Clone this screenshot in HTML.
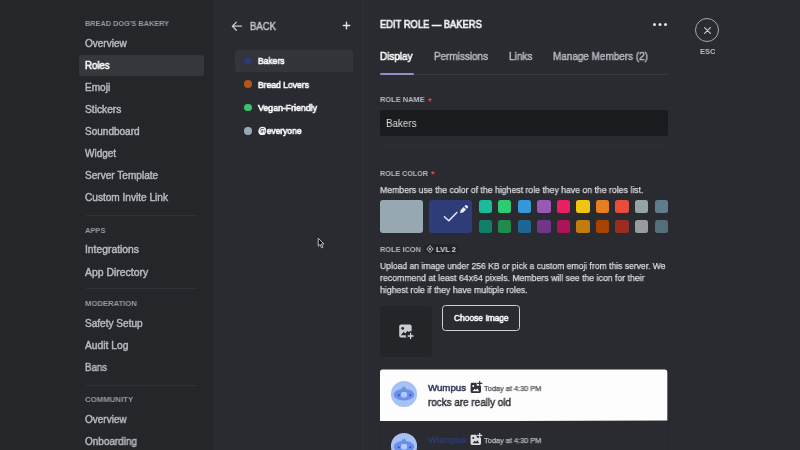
<!DOCTYPE html>
<html>
<head>
<meta charset="utf-8">
<title>Edit Role</title>
<style>
*{box-sizing:border-box;margin:0;padding:0}
html,body{width:800px;height:450px;overflow:hidden;background:#2a2b30}
body{font-family:"Liberation Sans",sans-serif;position:relative;color:#dbdee1}
.abs{position:absolute;white-space:nowrap}
.t{position:absolute;white-space:nowrap;transform-origin:0 50%;will-change:transform}
#side{position:absolute;left:0;top:0;width:212.5px;height:450px;background:#25262a}
#mid{position:absolute;left:212.5px;top:0;width:151px;height:450px;background:#2a2b30}
#main{position:absolute;left:363px;top:0;width:437px;height:450px;background:#2a2b30;border-left:1.5px solid #303237}
.sep{position:absolute;left:85.5px;width:111px;height:1px;background:#303136}
.dot{position:absolute;left:244.400px;width:7.500px;height:7.500px;border-radius:50%}
.sw{position:absolute;width:13.200px;height:13.200px;border-radius:2.500px}
</style>
</head>
<body>
<div id="side"></div>
<div id="mid"></div>
<div id="main"></div>

<div class="abs" style="left:78.800px;top:54.5px;width:125px;height:21px;border-radius:3px;background:#36373d"></div>
<div class="sep" style="top:215.300px"></div>
<div class="sep" style="top:288.300px"></div>
<div class="sep" style="top:384.800px"></div>

<svg class="abs" style="left:230px;top:19px" width="14" height="14" viewBox="0 0 14 14"><path d="M11.500 7.200H2.800M6.400 3.100L2.400 7.200l4 4.100" fill="none" stroke="#c4c9ce" stroke-width="1.300" stroke-linecap="round" stroke-linejoin="round"/></svg>
<svg class="abs" style="left:342px;top:21px" width="9" height="9" viewBox="0 0 9 9"><path d="M4.500 1.300v6.400M1.300 4.500h6.400" stroke="#e3e5e8" stroke-width="1.400" stroke-linecap="round"/></svg>

<div class="abs" style="left:235px;top:49.500px;width:118px;height:22px;border-radius:3px;background:#34353b"></div>
<div class="dot" style="top:56.600px;background:#2b3a72"></div>
<div class="dot" style="top:80.300px;background:#b4531b"></div>
<div class="dot" style="top:103.700px;background:#3fc06d"></div>
<div class="dot" style="top:127.200px;background:#9aa7b3"></div>

<svg class="abs" style="left:317px;top:237px" width="10" height="14" viewBox="0 0 10 14"><path d="M1.200 1.200v8l1.900-1.700 1.500 3.300 1.300-.6-1.500-3.200h2.600z" fill="#0c0c0e" stroke="#c9c9cb" stroke-width=".9" stroke-linejoin="round"/></svg>

<div class="abs" style="left:653px;top:23.200px;width:3px;height:3px;border-radius:50%;background:#e3e5e8;box-shadow:5.500px 0 0 #e3e5e8,11px 0 0 #e3e5e8"></div>
<div class="abs" style="left:695px;top:18.300px;width:24px;height:24px;border-radius:50%;border:1.800px solid #a6a9af"></div>
<svg class="abs" style="left:702.500px;top:25.500px" width="9" height="9" viewBox="0 0 9 9"><path d="M1.600 1.600l5.800 5.800M7.400 1.600L1.600 7.400" stroke="#c4c9ce" stroke-width="1.200" stroke-linecap="round"/></svg>

<div class="abs" style="left:380px;top:73.500px;width:288px;height:1px;background:#393a40"></div>
<div class="abs" style="left:380px;top:73px;width:33.500px;height:2px;border-radius:1px;background:#8c91c9"></div>

<div class="abs" style="left:380px;top:110px;width:287.500px;height:26px;border-radius:2px;background:#1a1b1e"></div>
<div class="abs" style="left:380px;top:144.500px;width:287.500px;height:1px;background:#2e2f34"></div>

<div class="abs" style="left:380px;top:200px;width:43px;height:33px;border-radius:3px;background:#98a8b3"></div>
<div class="abs" style="left:429px;top:200px;width:43.300px;height:33px;border-radius:3px;background:#2e3c79"></div>
<svg class="abs" style="left:429px;top:200px" width="44" height="33" viewBox="0 0 44 33"><path d="M15.400 16.800l4.400 4 8-8.200" fill="none" stroke="#e9ecfa" stroke-width="1.500" stroke-linecap="round" stroke-linejoin="round"/><path d="M36.300 5.300a1.100 1.100 0 0 1 1.600 0l.9.900a1.100 1.100 0 0 1 0 1.600l-.9.900-2.500-2.500zM34.600 7l2.500 2.500-3 3-3 .6.600-3z" fill="#e9ebf2"/></svg>

<div class="sw" style="left:478.8px;top:200px;background:#1abc9c"></div>
<div class="sw" style="left:478.8px;top:219.6px;background:#11806a"></div>
<div class="sw" style="left:498.3px;top:200px;background:#2ecc71"></div>
<div class="sw" style="left:498.3px;top:219.6px;background:#1f8b4c"></div>
<div class="sw" style="left:517.8px;top:200px;background:#3498db"></div>
<div class="sw" style="left:517.8px;top:219.6px;background:#206694"></div>
<div class="sw" style="left:537.4px;top:200px;background:#9b59b6"></div>
<div class="sw" style="left:537.4px;top:219.6px;background:#71368a"></div>
<div class="sw" style="left:556.9px;top:200px;background:#e91e63"></div>
<div class="sw" style="left:556.9px;top:219.6px;background:#ad1457"></div>
<div class="sw" style="left:576.4px;top:200px;background:#f1c40f"></div>
<div class="sw" style="left:576.4px;top:219.6px;background:#c27c0e"></div>
<div class="sw" style="left:595.9px;top:200px;background:#e67e22"></div>
<div class="sw" style="left:595.9px;top:219.6px;background:#a84300"></div>
<div class="sw" style="left:615.4px;top:200px;background:#e74c3c"></div>
<div class="sw" style="left:615.4px;top:219.6px;background:#992d22"></div>
<div class="sw" style="left:635.0px;top:200px;background:#95a5a6"></div>
<div class="sw" style="left:635.0px;top:219.6px;background:#979c9f"></div>
<div class="sw" style="left:654.5px;top:200px;background:#607d8b"></div>
<div class="sw" style="left:654.5px;top:219.6px;background:#546e7a"></div>
<div class="abs" style="left:424.300px;top:243.500px;width:35px;height:10.500px;border-radius:5.250px;background:#222327"></div>
<svg class="abs" style="left:426px;top:245px" width="8" height="8" viewBox="0 0 8 8"><path d="M4 .5L7.200 4 4 7.500.8 4z" fill="none" stroke="#c4c9ce" stroke-width=".9" stroke-linejoin="round"/><path d="M4 2.600L5.300 4 4 5.400 2.700 4z" fill="#c4c9ce"/></svg>

<div class="abs" style="left:380px;top:305.500px;width:52px;height:51px;border-radius:4px;background:#232529"></div>
<svg class="abs" style="left:398px;top:323px" width="18" height="18" viewBox="0 0 18 18"><rect x="1.200" y="1.600" width="12.400" height="13" rx="1.800" fill="#c9cdd3"/><circle cx="4.700" cy="5.400" r="1.400" fill="#232529"/><path d="M2.800 12.200l2.900-3.400 1.700 1.800 2.200-2.800 2.600 2.800v1.600z" fill="#232529"/><path d="M12.600 9.800v6.400M9.400 13h6.400" stroke="#232529" stroke-width="3.400" stroke-linecap="round"/><path d="M12.600 10.500v5M10.100 13h5" stroke="#d5d8dd" stroke-width="1.300" stroke-linecap="round"/></svg>

<div class="abs" style="left:442px;top:304.500px;width:77.500px;height:26px;border-radius:3.500px;border:1.300px solid #cfd1d5"></div>

<svg class="abs" style="left:379px;top:367px" width="290" height="55" viewBox="0 0 290 55"><path d="M1 54.500V5a2.500 2.500 0 0 1 2.500-2.500h282.300a2.500 2.500 0 0 1 2.500 2.500v48.500z" fill="#fdfdfd"/></svg>
<div class="abs" style="left:380px;top:420.500px;width:287.500px;height:30px;background:#2a2b30;border:1px solid #242529;border-top:none"></div>
<svg class="abs" style="left:390px;top:380.1px" width="28" height="28" viewBox="-14 -14 28 28"><circle r="13.100" fill="#a7c0f6"/><path d="M-2.400 -4.500l.5-3 1.300 1.600L.8-7.900l1.400 3.600z" fill="#5d93d6"/><ellipse cx="0" cy=".7" rx="10.300" ry="5.900" fill="#6a90ea"/><rect x="-2.900" y="-1.900" width="6" height="5.400" rx="1.800" fill="#b4c9f8"/><circle cx="-5.200" cy="1.200" r=".95" fill="#2f4fb8"/><circle cx="6.300" cy="1.200" r=".95" fill="#2f4fb8"/></svg>
<svg class="abs" style="left:390px;top:432px" width="28" height="28" viewBox="-14 -14 28 28"><circle r="13.100" fill="#a7c0f6"/><path d="M-2.400 -4.500l.5-3 1.300 1.600L.8-7.900l1.400 3.600z" fill="#5d93d6"/><ellipse cx="0" cy=".7" rx="10.300" ry="5.900" fill="#6a90ea"/><rect x="-2.900" y="-1.900" width="6" height="5.400" rx="1.800" fill="#b4c9f8"/><circle cx="-5.200" cy="1.200" r=".95" fill="#2f4fb8"/><circle cx="6.300" cy="1.200" r=".95" fill="#2f4fb8"/></svg>
<svg class="abs" style="left:469.5px;top:380.5px" width="13" height="13" viewBox="0 0 13 13"><path d="M2 1.700h4.600v2a1.100 1.100 0 0 0 1.100 1.100H11v5.800A1.400 1.400 0 0 1 9.600 12H2A1.400 1.400 0 0 1 .6 10.600V3.100A1.400 1.400 0 0 1 2 1.700z" fill="#313338"/><circle cx="3.300" cy="5" r="1.050" fill="#fdfdfd"/><path d="M2.600 10.200l2-2.400 1.300 1.300 1.500-1.800 1.700 2.900z" fill="#fdfdfd"/><path d="M9.700 0.200v4.200M7.600 2.300h4.200" stroke="#313338" stroke-width="1.200" stroke-linecap="round"/></svg>
<svg class="abs" style="left:469.5px;top:432.5px" width="13" height="13" viewBox="0 0 13 13"><path d="M2 1.700h4.600v2a1.100 1.100 0 0 0 1.100 1.100H11v5.800A1.400 1.400 0 0 1 9.600 12H2A1.400 1.400 0 0 1 .6 10.600V3.100A1.400 1.400 0 0 1 2 1.700z" fill="#dbdee1"/><circle cx="3.300" cy="5" r="1.050" fill="#2a2b30"/><path d="M2.600 10.200l2-2.400 1.300 1.300 1.500-1.800 1.700 2.900z" fill="#2a2b30"/><path d="M9.700 0.200v4.200M7.600 2.300h4.200" stroke="#dbdee1" stroke-width="1.200" stroke-linecap="round"/></svg>

<div class="t" style="left:85.3px;top:18px;font-size:8px;line-height:11px;font-weight:700;color:#949ba4;transform:scaleX(0.9146);">BREAD DOG'S BAKERY</div>
<div class="t" style="left:85.3px;top:37px;font-size:10px;line-height:14px;font-weight:400;color:#b5bac1;transform:scaleX(1.0003);-webkit-text-stroke:.45px currentColor;">Overview</div>
<div class="t" style="left:85.3px;top:59px;font-size:10px;line-height:14px;font-weight:400;color:#ffffff;transform:scaleX(0.9657);-webkit-text-stroke:.55px currentColor;">Roles</div>
<div class="t" style="left:85.3px;top:81px;font-size:10px;line-height:14px;font-weight:400;color:#b5bac1;transform:scaleX(1.0074);-webkit-text-stroke:.45px currentColor;">Emoji</div>
<div class="t" style="left:85.3px;top:103px;font-size:10px;line-height:14px;font-weight:400;color:#b5bac1;transform:scaleX(1.0236);-webkit-text-stroke:.45px currentColor;">Stickers</div>
<div class="t" style="left:85.3px;top:125px;font-size:10px;line-height:14px;font-weight:400;color:#b5bac1;transform:scaleX(1.0018);-webkit-text-stroke:.45px currentColor;">Soundboard</div>
<div class="t" style="left:85.3px;top:147px;font-size:10px;line-height:14px;font-weight:400;color:#b5bac1;transform:scaleX(0.9992);-webkit-text-stroke:.45px currentColor;">Widget</div>
<div class="t" style="left:85.3px;top:169px;font-size:10px;line-height:14px;font-weight:400;color:#b5bac1;transform:scaleX(1.0077);-webkit-text-stroke:.45px currentColor;">Server Template</div>
<div class="t" style="left:85.3px;top:191px;font-size:10px;line-height:14px;font-weight:400;color:#b5bac1;transform:scaleX(1.0089);-webkit-text-stroke:.45px currentColor;">Custom Invite Link</div>
<div class="t" style="left:85.3px;top:225px;font-size:8px;line-height:11px;font-weight:700;color:#949ba4;transform:scaleX(0.9359);">APPS</div>
<div class="t" style="left:85.3px;top:243px;font-size:10px;line-height:14px;font-weight:400;color:#b5bac1;transform:scaleX(1.0332);-webkit-text-stroke:.45px currentColor;">Integrations</div>
<div class="t" style="left:85.3px;top:266px;font-size:10px;line-height:14px;font-weight:400;color:#b5bac1;transform:scaleX(1.0416);-webkit-text-stroke:.45px currentColor;">App Directory</div>
<div class="t" style="left:85.3px;top:298px;font-size:8px;line-height:11px;font-weight:700;color:#949ba4;transform:scaleX(0.9597);">MODERATION</div>
<div class="t" style="left:85.3px;top:317px;font-size:10px;line-height:14px;font-weight:400;color:#b5bac1;transform:scaleX(1.0076);-webkit-text-stroke:.45px currentColor;">Safety Setup</div>
<div class="t" style="left:85.3px;top:339px;font-size:10px;line-height:14px;font-weight:400;color:#b5bac1;transform:scaleX(1.0268);-webkit-text-stroke:.45px currentColor;">Audit Log</div>
<div class="t" style="left:85.3px;top:361px;font-size:10px;line-height:14px;font-weight:400;color:#b5bac1;transform:scaleX(0.9650);-webkit-text-stroke:.45px currentColor;">Bans</div>
<div class="t" style="left:85.3px;top:394px;font-size:8px;line-height:11px;font-weight:700;color:#949ba4;transform:scaleX(0.9771);">COMMUNITY</div>
<div class="t" style="left:85.3px;top:413px;font-size:10px;line-height:14px;font-weight:400;color:#b5bac1;transform:scaleX(0.9955);-webkit-text-stroke:.45px currentColor;">Overview</div>
<div class="t" style="left:85.3px;top:435px;font-size:10px;line-height:14px;font-weight:400;color:#b5bac1;transform:scaleX(0.9930);-webkit-text-stroke:.45px currentColor;">Onboarding</div>
<div class="t" style="left:249.5px;top:19px;font-size:10.5px;line-height:15px;font-weight:400;color:#c0c4ca;transform:scaleX(0.9093);-webkit-text-stroke:.45px currentColor;">BACK</div>
<div class="t" style="left:257.5px;top:54px;font-size:9.5px;line-height:13px;font-weight:400;color:#fafafb;transform:scaleX(0.8959);-webkit-text-stroke:.65px currentColor;">Bakers</div>
<div class="t" style="left:257.5px;top:78px;font-size:9.5px;line-height:13px;font-weight:400;color:#fafafb;transform:scaleX(0.9024);-webkit-text-stroke:.65px currentColor;">Bread Lovers</div>
<div class="t" style="left:257.5px;top:101px;font-size:9.5px;line-height:13px;font-weight:400;color:#fafafb;transform:scaleX(0.9232);-webkit-text-stroke:.65px currentColor;">Vegan-Friendly</div>
<div class="t" style="left:257.5px;top:124px;font-size:9.5px;line-height:13px;font-weight:400;color:#fafafb;transform:scaleX(0.8926);-webkit-text-stroke:.65px currentColor;">@everyone</div>
<div class="t" style="left:380px;top:17px;font-size:10.5px;line-height:15px;font-weight:400;color:#f2f3f5;transform:scaleX(0.8915);-webkit-text-stroke:.7px currentColor;">EDIT ROLE — BAKERS</div>
<div class="t" style="left:699.5px;top:47px;font-size:7.5px;line-height:10px;font-weight:700;color:#b5bac1;transform:scaleX(0.9726);">ESC</div>
<div class="t" style="left:380px;top:49px;font-size:10.5px;line-height:15px;font-weight:400;color:#ffffff;transform:scaleX(0.9437);-webkit-text-stroke:.55px currentColor;">Display</div>
<div class="t" style="left:433.5px;top:49px;font-size:10.5px;line-height:15px;font-weight:400;color:#b5bac1;transform:scaleX(0.9443);-webkit-text-stroke:.45px currentColor;">Permissions</div>
<div class="t" style="left:508.5px;top:49px;font-size:10.5px;line-height:15px;font-weight:400;color:#b5bac1;transform:scaleX(0.9586);-webkit-text-stroke:.45px currentColor;">Links</div>
<div class="t" style="left:552.5px;top:49px;font-size:10.5px;line-height:15px;font-weight:400;color:#b5bac1;transform:scaleX(0.9465);-webkit-text-stroke:.45px currentColor;">Manage Members (2)</div>
<div class="t" style="left:380px;top:94px;font-size:8px;line-height:11px;font-weight:700;color:#b5bac1;transform:scaleX(0.9271);">ROLE NAME</div>
<div class="t" style="left:427.8px;top:94px;font-size:9.5px;line-height:13px;font-weight:700;color:#e0484d;">*</div>
<div class="t" style="left:386px;top:116px;font-size:10.5px;line-height:15px;font-weight:400;color:#dbdee1;transform:scaleX(0.9331);">Bakers</div>
<div class="t" style="left:380px;top:168px;font-size:8px;line-height:11px;font-weight:700;color:#b5bac1;transform:scaleX(0.8998);">ROLE COLOR</div>
<div class="t" style="left:431.3px;top:167px;font-size:9.5px;line-height:13px;font-weight:700;color:#e0484d;">*</div>
<div class="t" style="left:380px;top:183px;font-size:9.5px;line-height:13px;font-weight:400;color:#dbdee1;transform:scaleX(0.9149);-webkit-text-stroke:.25px currentColor;">Members use the color of the highest role they have on the roles list.</div>
<div class="t" style="left:380px;top:244px;font-size:8px;line-height:11px;font-weight:700;color:#b5bac1;transform:scaleX(0.9178);">ROLE ICON</div>
<div class="t" style="left:436px;top:244px;font-size:8px;line-height:11px;font-weight:700;color:#dbdee1;transform:scaleX(0.9503);">LVL 2</div>
<div class="t" style="left:380px;top:259px;font-size:9.5px;line-height:13px;font-weight:400;color:#dbdee1;transform:scaleX(0.9017);-webkit-text-stroke:.25px currentColor;">Upload an image under 256 KB or pick a custom emoji from this server. We</div>
<div class="t" style="left:380px;top:271px;font-size:9.5px;line-height:13px;font-weight:400;color:#dbdee1;transform:scaleX(0.9175);-webkit-text-stroke:.25px currentColor;">recommend at least 64x64 pixels. Members will see the icon for their</div>
<div class="t" style="left:380px;top:283px;font-size:9.5px;line-height:13px;font-weight:400;color:#dbdee1;transform:scaleX(0.9128);-webkit-text-stroke:.25px currentColor;">highest role if they have multiple roles.</div>
<div class="t" style="left:453.5px;top:311px;font-size:9.5px;line-height:13px;font-weight:400;color:#ffffff;transform:scaleX(0.8819);-webkit-text-stroke:.55px currentColor;">Choose Image</div>
<div class="t" style="left:427.5px;top:381px;font-size:9.5px;line-height:13px;font-weight:400;color:#363f5e;transform:scaleX(1.0184);-webkit-text-stroke:.55px currentColor;">Wumpus</div>
<div class="t" style="left:484px;top:384px;font-size:7.5px;line-height:10px;font-weight:400;color:#4e5058;transform:scaleX(0.9850);-webkit-text-stroke:.25px currentColor;">Today at 4:30 PM</div>
<div class="t" style="left:427.5px;top:395px;font-size:10.5px;line-height:15px;font-weight:400;color:#2e3036;transform:scaleX(0.9418);-webkit-text-stroke:.45px currentColor;">rocks are really old</div>
<div class="t" style="left:427.5px;top:433px;font-size:9.5px;line-height:13px;font-weight:400;color:#2c3a70;transform:scaleX(1.0184);-webkit-text-stroke:.55px currentColor;">Wumpus</div>
<div class="t" style="left:484px;top:436px;font-size:7.5px;line-height:10px;font-weight:400;color:#b5bac1;transform:scaleX(0.9850);-webkit-text-stroke:.25px currentColor;">Today at 4:30 PM</div>
</body>
</html>
